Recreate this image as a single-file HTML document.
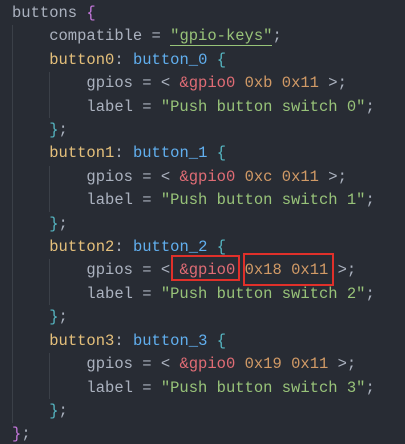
<!DOCTYPE html><html><head><style>
html,body{margin:0;padding:0;background:#282c34;width:405px;height:444px;overflow:hidden}
pre{margin:0;padding:2px 0 0 12px;font-family:"Liberation Mono","DejaVu Sans Mono",monospace;font-size:15.5px;line-height:23.4px;color:#abb2bf;position:relative}
.k{color:#e5c07b}.b{color:#61afef}.s{color:#98c379}.r{color:#e06c75}.n{color:#d19a66}.p{color:#c678dd}.c{color:#56b6c2}
.g{position:absolute;width:1px;background:#3b4048}
.box{position:absolute;border:2px solid #e0302a;box-sizing:border-box}
.u{border-bottom:1px solid #98c379}
</style></head><body>
<div class="g" style="left:12px;top:25px;height:398px"></div>
<div class="g" style="left:49px;top:72px;height:46px"></div>
<div class="g" style="left:49px;top:166px;height:46px"></div>
<div class="g" style="left:49px;top:259px;height:46px"></div>
<div class="g" style="left:49px;top:353px;height:46px"></div>
<pre>buttons <span class="p">{</span>
    compatible = <span class="s u">"gpio-keys"</span>;
    <span class="k">button0</span>: <span class="b">button_0</span> <span class="c">{</span>
        gpios = &lt; <span class="r">&amp;gpio0</span> <span class="n">0xb</span> <span class="n">0x11</span> &gt;;
        label = <span class="s">"Push button switch 0"</span>;
    <span class="c">}</span>;
    <span class="k">button1</span>: <span class="b">button_1</span> <span class="c">{</span>
        gpios = &lt; <span class="r">&amp;gpio0</span> <span class="n">0xc</span> <span class="n">0x11</span> &gt;;
        label = <span class="s">"Push button switch 1"</span>;
    <span class="c">}</span>;
    <span class="k">button2</span>: <span class="b">button_2</span> <span class="c">{</span>
        gpios = &lt; <span class="r">&amp;gpio0</span> <span class="n">0x18</span> <span class="n">0x11</span> &gt;;
        label = <span class="s">"Push button switch 2"</span>;
    <span class="c">}</span>;
    <span class="k">button3</span>: <span class="b">button_3</span> <span class="c">{</span>
        gpios = &lt; <span class="r">&amp;gpio0</span> <span class="n">0x19</span> <span class="n">0x11</span> &gt;;
        label = <span class="s">"Push button switch 3"</span>;
    <span class="c">}</span>;
<span class="p">}</span>;</pre>
<div class="box" style="left:171px;top:255px;width:69px;height:26px"></div>
<div class="box" style="left:243px;top:253px;width:91px;height:33px"></div>
</body></html>
